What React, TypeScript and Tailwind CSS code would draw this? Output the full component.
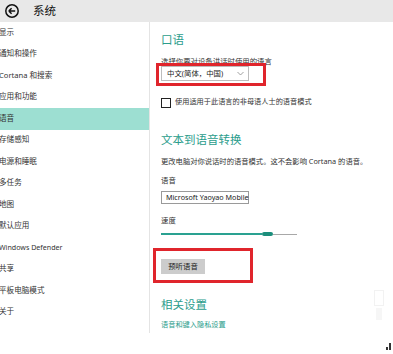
import React from "react";

const items = [
  "显示",
  "通知和操作",
  "Cortana 和搜索",
  "应用和功能",
  "语音",
  "存储感知",
  "电源和睡眠",
  "多任务",
  "地图",
  "默认应用",
  "Windows Defender",
  "共享",
  "平板电脑模式",
  "关于",
];

const font = { fontFamily: '"Noto Sans", "Noto Sans CJK SC", sans-serif' };

export default function App() {
  return (
    <div
      className="relative w-[393px] h-[354px] bg-white overflow-hidden text-[#222]"
      style={font}
    >
      {/* header */}
      <div className="h-[22px] bg-[#e8e8e8] flex items-center">
        <svg width="16" height="16" viewBox="0 0 16 16" className="ml-[4px]">
          <circle cx="8" cy="8" r="6.2" fill="none" stroke="#111" strokeWidth="1.5" />
          <path d="M4.8 8 H11.2 M4.8 8 L7.6 5.2 M4.8 8 L7.6 10.8" fill="none" stroke="#111" strokeWidth="1.5" />
        </svg>
        <span className="ml-[13px] text-[11.5px] leading-none text-[#111]">系统</span>
      </div>

      <div className="flex h-[311px]">
        {/* sidebar */}
        <div className="w-[150px] border-r border-[#e4e4e4] flex flex-col">
          {items.map((t) => (
            <div
              key={t}
              className={`h-[21.5px] flex items-center leading-none text-[#333] ${
                t === "Windows Defender" ? "text-[7.1px]" : "text-[7.6px]"
              } ${t === "语音" ? "bg-[#9ddfd2] w-[149px]" : ""}`}
            >
              <span className="ml-[-1px] whitespace-nowrap">{t}</span>
            </div>
          ))}
        </div>

        {/* content */}
        <div className="flex flex-col pl-[11px] flex-1">
          <div className="mt-[10px] h-[16px] flex items-center text-[11.5px] leading-none text-[#2b9d8c]">口语</div>
          <div className="mt-[9px] h-[10px] flex items-center text-[7.4px] leading-none text-[#333] whitespace-nowrap">
            选择你要对设备讲话时使用的语言
          </div>
          <div className="relative mt-[-1px] w-[88px] h-[15px] border border-[#bdbdbd] bg-white flex items-center justify-between pl-[5px] pr-[4px]">
            <span className="text-[7.4px] leading-none text-[#222] whitespace-nowrap">中文(简体，中国)</span>
            <svg width="7" height="5" viewBox="0 0 7 5">
              <path d="M0.5 1 L3.5 4 L6.5 1" fill="none" stroke="#888" strokeWidth="0.8" />
            </svg>
            <div className="absolute left-[-6px] top-[-4px] w-[110px] h-[23px] border-[3px] border-[#e0252c]" />
          </div>
          <div className="mt-[16px] h-[12px] flex items-center">
            <div className="w-[10px] h-[10px] border border-[#222]" />
            <span className="ml-[4px] mt-[-3px] text-[7.2px] leading-none text-[#333] whitespace-nowrap">
              使用适用于此语言的非母语人士的语音模式
            </span>
          </div>

          <div className="mt-[23px] h-[16px] flex items-center text-[11.5px] leading-none text-[#2b9d8c] whitespace-nowrap">
            文本到语音转换
          </div>
          <div className="mt-[9px] h-[10px] flex items-center text-[7.3px] leading-none text-[#333] whitespace-nowrap">
            更改电脑对你说话时的语音模式。这不会影响 Cortana 的语音。
          </div>
          <div className="mt-[9px] h-[10px] flex items-center text-[7.4px] leading-none text-[#333]">语音</div>
          <div className="mt-[5px] w-[88px] h-[13px] border border-[#9a9a9a] flex items-center pl-[4px]">
            <span className="text-[7.2px] leading-none text-[#222] whitespace-nowrap">Microsoft Yaoyao Mobile</span>
          </div>
          <div className="mt-[12px] h-[10px] flex items-center text-[7.4px] leading-none text-[#333]">速度</div>
          <div className="mt-[4px] h-[8px] w-[136px] flex items-center">
            <div className="h-[1.5px] w-[101px] bg-[#2aa191]" />
            <div className="h-[4px] w-[11px] rounded-[2px] bg-[#1c8e7c]" />
            <div className="h-[1px] flex-1 bg-[#a8a8a8]" />
          </div>

          <div className="relative mt-[21px] w-[44px] h-[15px] bg-[#cccccc] flex items-center justify-center">
            <span className="text-[7.4px] leading-none text-[#222] whitespace-nowrap">预听语音</span>
            <div className="absolute left-[-8px] top-[-11px] w-[100px] h-[35px] border-[3px] border-[#e0252c]" />
          </div>

          <div className="mt-[23px] h-[16px] flex items-center text-[11.5px] leading-none text-[#2b9d8c] whitespace-nowrap">
            相关设置
          </div>
          <div className="mt-[7px] h-[10px] flex items-center text-[7.2px] leading-none text-[#2b9d8c] whitespace-nowrap">
            语音和键入隐私设置
          </div>
        </div>
      </div>

      {/* faint overlay marks */}
      <div className="absolute left-[374px] top-[290px] w-[10px] h-[16px] border border-[#f2f2f2]" />
      <div className="absolute left-[376px] top-[308px] w-[6px] h-[12px] bg-[#f6f6f6]" />
      <div className="absolute left-[386px] top-[347px] w-[2px] h-[3px] bg-[#333]" />
      <div className="absolute left-[389px] top-[343px] w-[1.5px] h-[7px] bg-[#333]" />
    </div>
  );
}
